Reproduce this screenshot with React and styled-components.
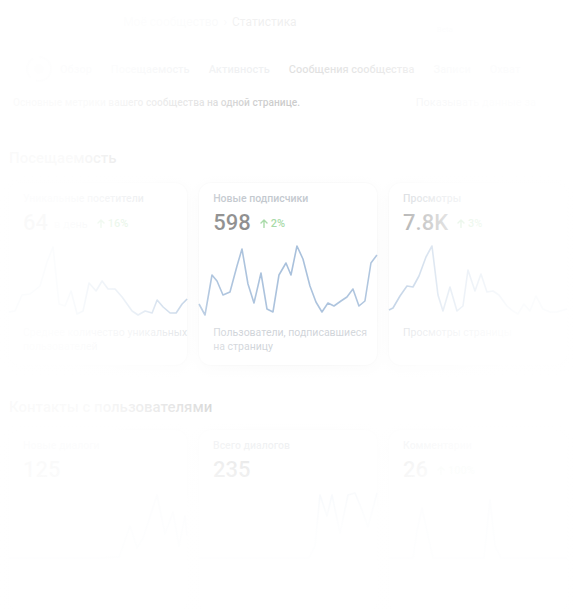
import React from 'react';
import styled, { createGlobalStyle } from 'styled-components';

const GlobalStyle = createGlobalStyle`
  body {
    margin: 0;
    background: #ffffff;
    font-family: Roboto, "Noto Sans", "Liberation Sans", sans-serif;
  }
`;

const Page = styled.div`
  position: relative;
  width: 576px;
  height: 609px;
  overflow: hidden;
  background: #ffffff;
`;

/* spotlight: fades everything except the middle card */
const Fade = styled.div`
  position: absolute;
  inset: 0;
  pointer-events: none;
  background:
    linear-gradient(
      to bottom,
      rgba(255, 255, 255, 0) 0px,
      rgba(255, 255, 255, 0) 420px,
      rgba(255, 255, 255, 0.6) 540px,
      rgba(255, 255, 255, 0.8) 609px
    ),
    radial-gradient(
      ellipse 250px 300px at 290px 258px,
      rgba(255, 255, 255, 0.5) 0%,
      rgba(255, 255, 255, 0.55) 33%,
      rgba(255, 255, 255, 0.87) 63%,
      rgba(255, 255, 255, 0.975) 92%
    );
`;

const Header = styled.div`
  height: 44px;
  display: flex;
  align-items: center;
  justify-content: center;
  gap: 5px;
  font-size: 12px;
  color: #818c99;
`;

const Crumb = styled.span`
  color: ${(p) => (p.$current ? '#222' : '#99a2ad')};
`;

const HeaderTag = styled.span`
  font-size: 8px;
  color: #99a2ad;
  margin-left: 135px;
  margin-top: 14px;
`;

const Tabs = styled.div`
  margin-top: 10px;
  height: 30px;
  display: flex;
  align-items: center;
  gap: 19px;
  padding-left: 24px;
  font-size: 11px;
  font-weight: 500;
  white-space: nowrap;
`;

const LogoBox = styled.div`
  display: flex;
  margin-right: -13px;
`;

const Tab = styled.span`
  color: ${(p) => (p.$active ? '#222' : '#818c99')};
`;

const Intro = styled.div`
  margin-top: 9px;
  height: 18px;
  display: flex;
  align-items: center;
  padding: 0 40px 0 13px;
  font-size: 10.2px;
  font-weight: 500;
  white-space: nowrap;
`;

const IntroText = styled.span`
  color: #333;
`;

const IntroLink = styled.span`
  margin-left: auto;
  color: #99a2ad;
  font-size: 11px;
  font-weight: 400;
`;

const SectionTitle = styled.h2`
  margin: ${(p) => p.$top}px 0 0;
  padding: 0 9px;
  height: 22px;
  line-height: 22px;
  font-size: 15px;
  font-weight: 500;
  color: #222;
`;

const CardRow = styled.div`
  margin-top: ${(p) => p.$top}px;
  padding: 0 9px;
  display: grid;
  grid-template-columns: repeat(3, 1fr);
  gap: 12px;
`;

const Card = styled.div`
  background: #fff;
  border-radius: 12px;
  box-shadow: 0 0 0 1px rgba(0, 0, 0, 0.03), 0 3px 14px rgba(0, 0, 0, 0.06);
  padding: 9px 0 10px;
  height: ${(p) => p.$height}px;
  box-sizing: border-box;
`;

const CardTitle = styled.div`
  padding: 0 14px;
  font-size: 10.5px;
  line-height: 14px;
  color: #818c99;
  font-weight: 500;
  white-space: nowrap;
`;

const ValueRow = styled.div`
  margin-top: 2px;
  padding: 0 14px;
  height: 28px;
  display: flex;
  align-items: center;
  gap: 9px;
  white-space: nowrap;
`;

const Value = styled.span`
  font-size: 22px;
  font-weight: 500;
  color: #111;
`;

const Unit = styled.span`
  font-size: 11px;
  color: #99a2ad;
  margin-left: -3px;
  margin-top: 4px;
`;

const Delta = styled.span`
  display: flex;
  align-items: center;
  gap: 3px;
  margin-top: 3px;
  font-size: 11px;
  font-weight: 500;
  color: #4bb34b;
`;

const Chart = styled.svg`
  display: block;
  margin-top: 3px;
  width: 100%;
  height: 80px;
  overflow: visible;
`;

const Desc = styled.div`
  margin-top: 7px;
  padding: 0 0 0 14px;
  font-size: 10.5px;
  line-height: 14px;
  color: #99a2ad;
  white-space: pre;
`;

const Arrow = () => (
  <svg width="8" height="9" viewBox="0 0 8 9" fill="none">
    <path d="M4 8.5V1M1 4L4 1L7 4" stroke="currentColor" strokeWidth="1.4" strokeLinecap="round" strokeLinejoin="round" />
  </svg>
);

const Logo = () => (
  <svg width="30" height="30" viewBox="0 0 30 30" fill="none">
    <circle cx="15" cy="15" r="12" stroke="#c4c8cf" strokeWidth="2" strokeDasharray="22 6" />
    <circle cx="15" cy="15" r="5" fill="#dfe3e8" />
  </svg>
);

const lines = {
  visitors: '0,73 6,72 13,56 21,55 31,47 38,23 44,8 50,65 56,67 62,52 68,75 74,72 80,44 87,52 93,42 99,50 106,50 113,58 123,72 129,76 136,72 143,74 148,61 154,68 161,74 167,74 173,65 178,60',
  subs: '0,65 6,76 13,36 18,42 24,56 31,53 38,27 43,10 49,45 55,64 62,34 68,70 74,73 80,36 87,24 92,36 98,7 104,20 111,47 117,63 123,73 129,64 135,67 142,62 148,58 154,50 160,67 166,62 172,24 178,16',
  views: '0,71 4,69 11,57 18,47 24,48 30,37 37,18 43,7 49,56 54,72 61,48 68,72 74,67 79,31 86,52 92,35 98,53 104,52 110,56 118,67 124,72 129,75 135,65 141,72 147,57 154,70 161,73 168,73 178,70',
  dialogs: '0,72 60,72 90,72 110,71 121,40 128,62 134,52 148,9 156,48 164,26 170,60 176,30 178,50',
  total: '0,72 60,72 110,72 116,60 121,9 128,30 133,9 141,47 149,9 156,7 163,24 169,41 178,7',
  comments: '0,72 24,72 28,45 33,22 38,45 44,72 95,72 101,14 106,60 112,72 178,72',
};

const Line = ({ points }) => (
  <Chart viewBox="0 0 178 80" preserveAspectRatio="none">
    <polyline points={points} fill="none" stroke="#5181b8" strokeWidth="1.6" strokeLinejoin="round" />
  </Chart>
);

function StatCard({ title, value, unit, delta, points, desc, height }) {
  return (
    <Card $height={height}>
      <CardTitle>{title}</CardTitle>
      <ValueRow>
        <Value>{value}</Value>
        {unit && <Unit>{unit}</Unit>}
        {delta && (
          <Delta>
            <Arrow />
            {delta}
          </Delta>
        )}
      </ValueRow>
      <Line points={points} />
      {desc && <Desc>{desc}</Desc>}
    </Card>
  );
}

export default function App() {
  return (
    <>
      <GlobalStyle />
      <Page>
        <Header>
          <Crumb>Моё сообщество</Crumb>
          <Crumb>›</Crumb>
          <Crumb $current>Статистика</Crumb>
          <HeaderTag>Beta</HeaderTag>
        </Header>

        <Tabs>
          <LogoBox>
            <Logo />
          </LogoBox>
          <Tab>Обзор</Tab>
          <Tab>Посещаемость</Tab>
          <Tab>Активность</Tab>
          <Tab $active>Сообщения сообщества</Tab>
          <Tab>Записи</Tab>
          <Tab>Охват</Tab>
        </Tabs>

        <Intro>
          <IntroText>Основные метрики вашего сообщества на одной странице.</IntroText>
          <IntroLink>Показывать данные за</IntroLink>
        </Intro>

        <SectionTitle $top={36}>Посещаемость</SectionTitle>
        <CardRow $top={14}>
          <StatCard
            title="Уникальные посетители"
            value="64"
            unit="в день"
            delta="16%"
            points={lines.visitors}
            desc={'Среднее количество уникальных\nпользователей'}
            height={182}
          />
          <StatCard
            title="Новые подписчики"
            value="598"
            delta="2%"
            points={lines.subs}
            desc={'Пользователи, подписавшиеся\nна страницу'}
            height={182}
          />
          <StatCard
            title="Просмотры"
            value="7.8K"
            delta="3%"
            points={lines.views}
            desc="Просмотры страницы"
            height={182}
          />
        </CardRow>

        <SectionTitle $top={31}>Контакты с пользователями</SectionTitle>
        <CardRow $top={12}>
          <StatCard title="Новые диалоги" value="125" points={lines.dialogs} height={182} />
          <StatCard title="Всего диалогов" value="235" points={lines.total} height={182} />
          <StatCard title="Комментарии" value="26" delta="100%" points={lines.comments} height={182} />
        </CardRow>

        <Fade />
      </Page>
    </>
  );
}
